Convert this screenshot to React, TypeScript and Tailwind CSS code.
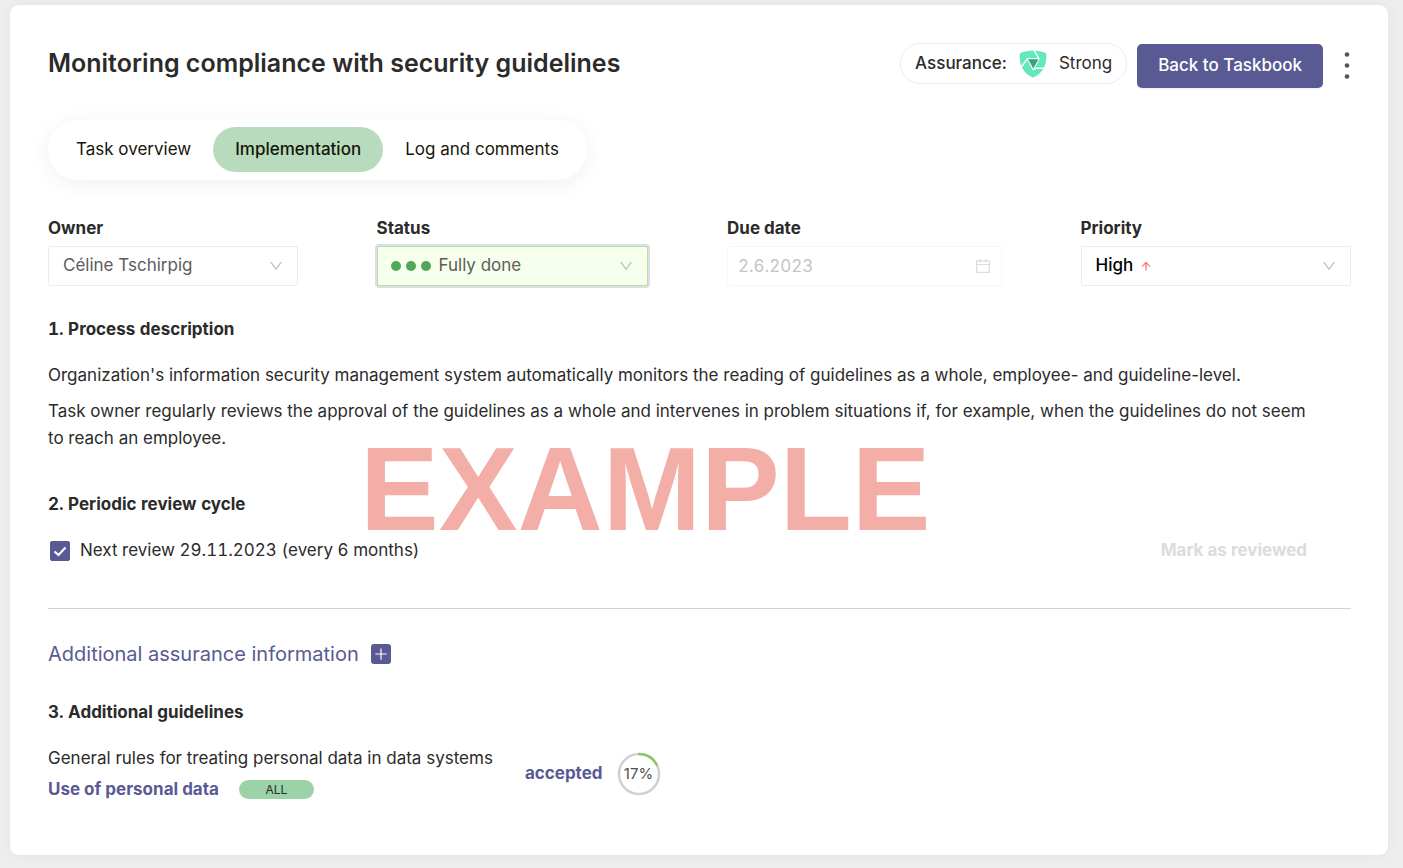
import { useState } from 'react';
import type { ReactNode } from 'react';
import {
  AiOutlineArrowUp,
  AiOutlineCalendar,
  AiOutlineDown,
  AiOutlinePlus,
} from 'react-icons/ai';

const tabs = ['Task overview', 'Implementation', 'Log and comments'];

type FieldProps = {
  id: string;
  label: string;
  children: ReactNode;
};

function Field({ id, label, children }: FieldProps) {
  return (
    <div>
      <label htmlFor={id} className="block text-[17px] leading-7 font-bold">
        {label}
      </label>
      <div className="relative mt-1">{children}</div>
    </div>
  );
}

function Chevron() {
  return (
    <AiOutlineDown className="pointer-events-none absolute top-3 right-3.5 size-4 text-[#bfbfbf]" />
  );
}

function SectionTitle({ children }: { children: ReactNode }) {
  return <h2 className="text-[17px] leading-7 font-bold tabular-nums">{children}</h2>;
}

function ShieldIcon() {
  return (
    <svg viewBox="0 0 28 28" className="size-7" aria-hidden="true">
      <path
        d="M14 0.5C10 0.7 5 1.5 0.8 3.2C0.2 11 2 17 5.5 21.5C8 24.5 11 26.5 14 27.5C17 26.5 20 24.5 22.5 21.5C26 17 27.8 11 27.2 3.2C23 1.5 18 0.7 14 0.5Z"
        fill="#62e8bb"
      />
      <path
        d="M20 8.7H8.5L2 17.5M14.8 0L20 8.7L14.2 19.5M8.5 8.7L14.2 19.5L17.5 18.2H25.5"
        fill="none"
        stroke="#fff"
        strokeWidth="1.4"
      />
      <path d="M9 9.2H19.5L14.3 18.6Z" fill="#38a07f" />
    </svg>
  );
}

function ProgressRing({ percent }: { percent: number }) {
  const radius = 20;
  const length = 2 * Math.PI * radius;

  return (
    <div className="relative flex size-11 items-center justify-center">
      <svg viewBox="0 0 44 44" className="absolute inset-0 size-full -rotate-90" aria-hidden="true">
        <circle cx="22" cy="22" r={radius} fill="none" stroke="#d0d0d0" strokeWidth="2.5" />
        <circle
          cx="22"
          cy="22"
          r={radius}
          fill="none"
          stroke="#87c962"
          strokeWidth="2.5"
          strokeLinecap="round"
          strokeDasharray={`${(length * percent) / 100} ${length}`}
        />
      </svg>
      <span className="text-[15px] text-[#505050]">{percent}%</span>
    </div>
  );
}

export default function App() {
  const [activeTab, setActiveTab] = useState('Implementation');
  const [reviewEnabled, setReviewEnabled] = useState(true);

  return (
    <div className="min-h-screen bg-[#eeeeee] pt-1 pr-3.5 pb-3 pl-[9px] font-['Inter',sans-serif] text-[17px] text-[#2b2b2b]">
      <main className="rounded-[10px] border border-[#e6e6fa] bg-white pt-[38px] pr-[37px] pb-[50px] pl-[38px] shadow-[0_0_16px_rgba(0,0,0,0.04)]">
        <header className="flex items-start">
          <h1 className="flex-1 text-[25px] leading-10 font-semibold">
            Monitoring compliance with security guidelines
          </h1>
          <div className="flex h-[41px] items-center gap-3 rounded-full border border-[#ececec] px-3.5">
            <span className="font-medium">Assurance:</span>
            <ShieldIcon />
            <span>Strong</span>
          </div>
          <button
            type="button"
            className="mt-px ml-2.5 h-11 rounded-[5px] bg-[#595a94] px-[21px] font-medium text-white shadow-[0_2px_0_rgba(0,0,0,0.04)]"
          >
            Back to Taskbook
          </button>
          <button
            type="button"
            aria-label="More actions"
            className="mt-px ml-5 flex h-11 w-2 justify-center text-[#555555]"
          >
            <svg viewBox="0 0 6 44" className="h-11 w-1.5" fill="currentColor" aria-hidden="true">
              <circle cx="3" cy="10.5" r="2.3" />
              <circle cx="3" cy="21.5" r="2.3" />
              <circle cx="3" cy="32.5" r="2.3" />
            </svg>
          </button>
        </header>

        <nav className="mt-8 flex h-[60px] w-fit items-start rounded-full bg-white px-1.5 pt-[7px] text-[#16160a] shadow-[0_4px_20px_rgba(60,60,30,0.07)]">
          {tabs.map((tab) => (
            <button
              key={tab}
              type="button"
              onClick={() => setActiveTab(tab)}
              className={`h-[45px] rounded-full px-[22px] ${
                tab === activeTab ? 'bg-[#b8dbbe] font-medium' : ''
              }`}
            >
              {tab}
            </button>
          ))}
        </nav>

        <div className="mt-[34px] grid grid-cols-[250fr_272fr_275fr_271fr] gap-x-[79px]">
          <Field id="owner" label="Owner">
            <select
              id="owner"
              className="h-10 w-full appearance-none rounded-xs border border-[#ececec] bg-white px-3.5 text-[#5c5c5c]"
            >
              <option>Céline Tschirpig</option>
            </select>
            <Chevron />
          </Field>
          <Field id="status" label="Status">
            <select
              id="status"
              className="h-10 w-full appearance-none rounded-xs border border-[#b4e391] bg-[#f6ffeb] pr-8 pl-[61px] text-[#5c5c5c] ring-2 ring-[#dedeeb]"
            >
              <option>Fully done</option>
            </select>
            <div className="pointer-events-none absolute top-[15px] left-3.5 flex gap-[5px]">
              <span className="size-2.5 rounded-full bg-[#50a758]" />
              <span className="size-2.5 rounded-full bg-[#50a758]" />
              <span className="size-2.5 rounded-full bg-[#50a758]" />
            </div>
            <Chevron />
          </Field>
          <Field id="due" label="Due date">
            <input
              id="due"
              type="text"
              disabled
              defaultValue="2.6.2023"
              className="h-10 w-full rounded-xs border border-[#f7f7f7] bg-white px-2.5 text-[#c4c4c4] tabular-nums"
            />
            <AiOutlineCalendar className="pointer-events-none absolute top-[11px] right-2.5 size-[18px] text-[#dddddd]" />
          </Field>
          <Field id="priority" label="Priority">
            <select
              id="priority"
              className="h-10 w-full appearance-none rounded-xs border border-[#ececec] bg-white px-3.5 font-medium text-black"
            >
              <option>High</option>
            </select>
            <AiOutlineArrowUp className="pointer-events-none absolute top-3.5 left-[59px] size-3 stroke-[20] text-[#f5655f]" />
            <Chevron />
          </Field>
        </div>

        <section className="mt-[29px]">
          <SectionTitle>1. Process description</SectionTitle>
          <p className="mt-[19px] leading-[27px]">
            Organization's information security management system automatically monitors the reading
            of guidelines as a whole, employee- and guideline-level.
          </p>
          <p className="mt-[9px] pr-8 leading-[27px]">
            Task owner regularly reviews the approval of the guidelines as a whole and intervenes in
            problem situations if, for example, when the guidelines do not seem to reach an employee.
          </p>
        </section>

        <section className="relative mt-[38px]">
          <SectionTitle>2. Periodic review cycle</SectionTitle>
          <div className="mt-[19px] flex h-7 items-center justify-between pr-11">
            <label className="flex items-center gap-2.5 tabular-nums">
              <span className="relative ml-0.5 size-5">
                <input
                  type="checkbox"
                  checked={reviewEnabled}
                  onChange={() => setReviewEnabled(!reviewEnabled)}
                  className="block size-5 appearance-none rounded-[2px] border border-[#595a94] checked:bg-[#595a94]"
                />
                <svg
                  viewBox="0 0 20 20"
                  className="pointer-events-none absolute inset-0 size-5"
                  fill="none"
                  stroke="#fff"
                  strokeWidth="2.2"
                  aria-hidden="true"
                >
                  <path d="M4.5 10.5L8.5 14L15.5 6.5" />
                </svg>
              </span>
              Next review 29.11.2023 (every 6 months)
            </label>
            <button type="button" disabled className="font-bold text-[#dcdcdc]">
              Mark as reviewed
            </button>
          </div>
          <span className="pointer-events-none absolute -top-15 left-[312px] font-['Liberation_Sans',sans-serif] text-[118px] leading-none font-bold text-[#f3aea7]">
            EXAMPLE
          </span>
        </section>

        <hr className="mt-[43px] border-[#d2d2d2]" />

        <button
          type="button"
          className="mt-[30px] flex items-center gap-3 text-xl leading-[30px] text-[#595a94]"
        >
          Additional assurance information
          <span className="flex size-5 items-center justify-center rounded-[3px] bg-[#595a94] text-white">
            <AiOutlinePlus className="size-4" />
          </span>
        </button>

        <section className="mt-[29px]">
          <SectionTitle>3. Additional guidelines</SectionTitle>
          <div className="mt-[17px] flex items-center">
            <div className="leading-[31px]">
              <p>General rules for treating personal data in data systems</p>
              <div className="flex items-center gap-5">
                <a href="#" className="font-bold text-[#595a94]">
                  Use of personal data
                </a>
                <span className="h-[19px] w-[75px] rounded-full bg-[#9bd2a8] text-center text-xs leading-[19px]">
                  ALL
                </span>
              </div>
            </div>
            <a href="#" className="mr-3.5 ml-8 font-bold text-[#595a94]">
              accepted
            </a>
            <ProgressRing percent={17} />
          </div>
        </section>
      </main>
    </div>
  );
}
